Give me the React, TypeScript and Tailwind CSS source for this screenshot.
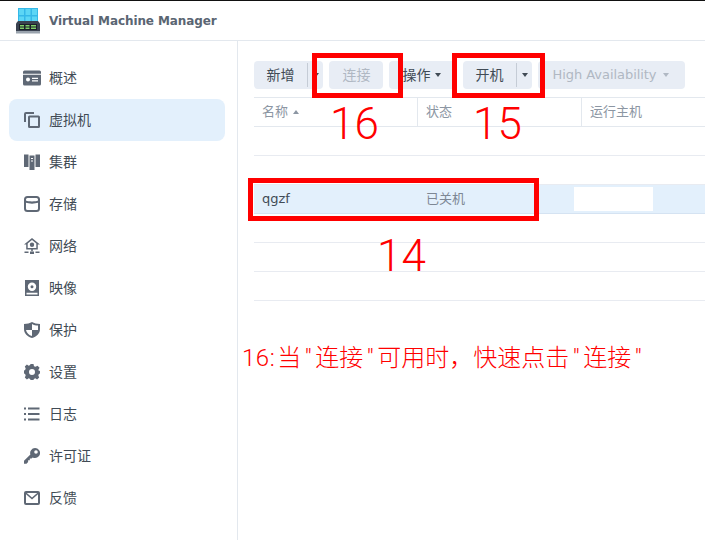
import type { ReactNode } from 'react';

const FONT = "font-['DejaVu_Sans','Noto_Sans_CJK_SC',sans-serif]";
const ICON = '#5f6875';

function Svg({ children }: { children: ReactNode }) {
  return (
    <svg width="16" height="16" viewBox="0 0 16 16" fill={ICON}>
      {children}
    </svg>
  );
}

const navItems: { label: string; icon: ReactNode }[] = [
  {
    label: '概述',
    icon: (
      <svg width="18" height="16" viewBox="0 0 18 16" fill={ICON}>
        <path fillRule="evenodd" d="M1.500 .500H16.500A1.500 1.500 0 0 1 18 2V14A1.500 1.500 0 0 1 16.500 15.500H1.500A1.500 1.500 0 0 1 0 14V2A1.500 1.500 0 0 1 1.500 .500ZM0 3.700V4.700H18V3.700ZM5 7.500A2 2 0 1 0 5 11.500A2 2 0 0 0 5 7.500ZM9 7.800V9H15V7.800ZM9 10.200V11.400H15V10.200Z" />
      </svg>
    ),
  },
  {
    label: '虚拟机',
    icon: (
      <Svg>
        <path d="M0 2A2 2 0 0 1 2 0H10V2H2V10H0Z" />
        <path fillRule="evenodd" d="M5.500 3.500H14.500A1.500 1.500 0 0 1 16 5V14.500A1.500 1.500 0 0 1 14.500 16H5.500A1.500 1.500 0 0 1 4 14.500V5A1.500 1.500 0 0 1 5.500 3.500ZM6 5.500V14H14V5.500Z" />
      </Svg>
    ),
  },
  {
    label: '集群',
    icon: (
      <Svg>
        <path fillRule="evenodd" d="M5.500 1.500H10.500V16H5.500ZM7 4V5H9V4ZM7 6.500V7.500H9V6.500Z" />
        <path d="M0 .500H4.500V13H0ZM11.500 .500H16V13H11.500Z" />
      </Svg>
    ),
  },
  {
    label: '存储',
    icon: (
      <Svg>
        <path fillRule="evenodd" d="M3.500 0H12.500A3.500 3.500 0 0 1 16 3.500V12.500A3.500 3.500 0 0 1 12.500 16H3.500A3.500 3.500 0 0 1 0 12.500V3.500A3.500 3.500 0 0 1 3.500 0ZM3.500 2A1.500 1.500 0 0 0 2 3.500V4.500C4 5.700 12 5.700 14 4.500V3.500A1.500 1.500 0 0 0 12.500 2ZM2 6.800V12.500A1.500 1.500 0 0 0 3.500 14H12.500A1.500 1.500 0 0 0 14 12.500V6.800C11.500 7.900 4.500 7.900 2 6.800Z" />
      </Svg>
    ),
  },
  {
    label: '网络',
    icon: (
      <Svg>
        <path fillRule="evenodd" d="M8 0L16 6.500H13.800V11.500H8.800V13.300H7.200V11.500H2.200V6.500H0ZM8 1.900L3.700 5.400V10H12.300V5.400ZM8 4.500A2.200 2.200 0 1 1 8 8.900A2.200 2.200 0 0 1 8 4.500Z" />
        <path d="M.500 13.500H4.500V15H.500ZM6 13.500H10V16H6ZM11.500 13.500H15.500V15H11.500Z" />
      </Svg>
    ),
  },
  {
    label: '映像',
    icon: (
      <Svg>
        <path fillRule="evenodd" d="M1 0H15V16H1ZM8 2.500A4.200 4.200 0 1 0 8 10.900A4.200 4.200 0 0 0 8 2.500ZM8 5.200A1.500 1.500 0 1 1 8 8.200A1.500 1.500 0 0 1 8 5.200ZM2.500 12.800V14.500H13.500V12.800Z" />
      </Svg>
    ),
  },
  {
    label: '保护',
    icon: (
      <Svg>
        <path fillRule="evenodd" d="M8 0C10 1.200 13 2 16 2V7C16 11.500 12.500 14.800 8 16C3.500 14.800 0 11.500 0 7V2C3 2 6 1.200 8 0ZM8 2V8H2C2.500 11 5 13.200 8 14V8H14V3.600C11.800 3.500 9.800 3 8 2Z" />
      </Svg>
    ),
  },
  {
    label: '设置',
    icon: (
      <Svg>
        <path fillRule="evenodd" d="M6.500 0H9.500L10 2.200L11.500 2.800L13.500 1.700L15.600 3.800L14.400 5.700L15 7.200L16 6.500V9.500L14.900 9.900L14.300 11.400L15.200 13.400L13.100 15.500L11.300 14.300L9.900 14.900L9.500 16H6.500L6.100 14.900L4.700 14.300L2.900 15.500L.800 13.400L1.700 11.400L1.100 9.900L0 9.500V6.500L1.100 6.100L1.700 4.600L.800 2.600L2.900 .500L4.700 1.700L6.100 1.100ZM8 5A3 3 0 1 0 8 11A3 3 0 0 0 8 5Z" />
      </Svg>
    ),
  },
  {
    label: '日志',
    icon: (
      <Svg>
        <path d="M0 1.500H2V3.500H0ZM4 1.500H15.500V3.500H4ZM0 7H2V9H0ZM4 7H15.500V9H4ZM0 12.500H2V14.500H0ZM4 12.500H15.500V14.500H4Z" />
      </Svg>
    ),
  },
  {
    label: '许可证',
    icon: (
      <Svg>
        <path fillRule="evenodd" d="M11 0A5 5 0 1 1 8.700 9.400L7.500 10.600H5.800V12.300H4.100V14L2.500 15.700H0V12.800L6.400 6.600A5 5 0 0 1 11 0ZM12 2.200A1.800 1.800 0 1 0 12 5.800A1.800 1.800 0 0 0 12 2.200Z" />
      </Svg>
    ),
  },
  {
    label: '反馈',
    icon: (
      <Svg>
        <path fillRule="evenodd" d="M2 1H14A2 2 0 0 1 16 3V13A2 2 0 0 1 14 15H2A2 2 0 0 1 0 13V3A2 2 0 0 1 2 1ZM2.800 3L8 7.500L13.200 3ZM2 4.300V13H14V4.300L8 9.500Z" />
      </Svg>
    ),
  },
];

function Logo() {
  return (
    <svg width="24" height="26" viewBox="0 0 24 26">
      <rect x="2" y="0" width="20" height="15" fill="#35b8e8" />
      <path d="M3 1h5v6H3ZM9.500 1h5v6h-5ZM16 1h5v6h-5ZM3 8.500h5V14H3ZM9.500 8.500h5V14h-5ZM16 8.500h5V14h-5Z" fill="#5cd6f5" />
      <path d="M0 15.500 L2 13h20l2 2.500V24H0Z" fill="#3a4250" />
      <rect x="0" y="23" width="24" height="2.500" fill="#9aa3ad" />
      <rect x="3" y="16" width="18" height="6" fill="#1a1f28" />
      <path d="M4 17h4v1.500H4ZM9.500 17h4v1.500h-4ZM15 17h5v1.500h-5ZM4 19.500h4V21H4ZM9.500 19.500h4V21h-4ZM15 19.500h5V21h-5Z" fill="#7fce6a" />
    </svg>
  );
}

function Caret({ color = 'border-t-[#414b55]' }: { color?: string }) {
  return <span className={`inline-block border-x-[3.5px] border-t-[4px] border-x-transparent ${color}`} />;
}

function SplitButton({ label }: { label: string }) {
  return (
    <div className="flex h-7 w-[69px] items-center rounded-[4px] bg-[#e8edf5] text-[14px] text-[#414b55]">
      <span className="flex-1 text-center">{label}</span>
      <span className="h-6 w-px bg-[#c5ccd6]" />
      <span className="flex w-[15px] justify-center">
        <Caret />
      </span>
    </div>
  );
}

function Row({ selected, children }: { selected?: boolean; children?: ReactNode }) {
  return (
    <div className={`grid h-[29px] grid-cols-[164px_164px_1fr] items-center border-b text-[13px] ${selected ? 'border-[#d5e3f2] bg-[#e3f0fc]' : 'border-[#e8ebf1]'}`}>
      {children}
    </div>
  );
}

function Box({ className }: { className: string }) {
  return <div className={`absolute border-[5px] border-[#ff0000] ${className}`} />;
}

function Note({ className, children }: { className: string; children: ReactNode }) {
  return <div className={`absolute whitespace-nowrap font-['Roboto','Noto_Sans_CJK_SC',sans-serif] font-light leading-none text-[#ff0000] ${className}`}>{children}</div>;
}

function Quote() {
  return <span className="inline-block w-[14px] text-center">″</span>;
}

export default function App() {
  return (
    <div className={`relative h-[540px] w-[705px] overflow-hidden bg-white ${FONT}`}>
      <div className="h-px bg-[#111]" />
      <header className="flex h-[40px] items-center gap-[9px] border-b border-[#e3e8ee] pl-4">
        <Logo />
        <span className="text-[12px] font-bold tracking-[-0.09px] text-[#5a6572]">Virtual Machine Manager</span>
      </header>

      <div className="flex h-[499px]">
        <aside className="w-[238px] shrink-0 border-r border-[#e3e8ee] pl-[9px] pr-3 pt-4">
          {navItems.map((item, i) => (
            <div
              key={item.label}
              className={`flex h-[42px] items-center rounded-lg text-[14px] text-[#414b55] ${i === 1 ? 'bg-[#e3f0fc]' : ''}`}
            >
              <span className="flex w-[40px] justify-center pl-[6px]">{item.icon}</span>
              <span>{item.label}</span>
            </div>
          ))}
        </aside>

        <main className="min-w-0 flex-1 pl-4 pt-5">
          <div className="flex gap-[6px]">
            <SplitButton label="新增" />
            <div className="flex h-7 w-[54px] items-center justify-center rounded-[4px] bg-[#e8edf5] pl-px text-[14px] text-[#b0b8c3]">连接</div>
            <div className="flex h-7 w-[68px] items-center justify-center gap-1 rounded-[4px] bg-[#e8edf5] pr-[3px] text-[14px] text-[#414b55]">
              操作 <Caret />
            </div>
            <SplitButton label="开机" />
            <div className="flex h-7 w-[147px] items-center justify-center gap-[6px] rounded-[4px] bg-[#e8edf5] pr-[2px] text-[13px] tracking-[-0.05px] text-[#b0b8c3]">
              High Availability <Caret color="border-t-[#b0b8c3]" />
            </div>
          </div>

          <div className="mt-2 w-[500px]">
            <div className="grid h-[30px] grid-cols-[164px_164px_1fr] items-center border-y border-[#e3e8ee] text-[13px] text-[#8c96a3]">
              <div className="flex h-full items-center gap-[5px] border-r border-[#e3e8ee] pl-2">
                名称
                <span className="inline-block border-x-[3.5px] border-b-[4px] border-x-transparent border-b-[#8c96a3]" />
              </div>
              <div className="flex h-full items-center border-r border-[#e3e8ee] pl-2">状态</div>
              <div className="pl-2">运行主机</div>
            </div>
            <Row />
            <Row />
            <Row selected>
              <div className="pl-2 text-[#414b55]">qgzf</div>
              <div className="pl-2 text-[#7d8794]">已关机</div>
              <div>
                <div className="ml-[-8px] h-6 w-[79px] bg-white" />
              </div>
            </Row>
            <Row />
            <Row />
            <Row />
          </div>
        </main>
      </div>

      {/* annotations drawn over the screenshot */}
      <Box className="left-[312px] top-[53px] h-[45px] w-[91px]" />
      <Box className="left-[452px] top-[53px] h-[45px] w-[93px]" />
      <Box className="left-[248px] top-[178px] h-[43px] w-[291px]" />
      <Note className="left-[330px] top-[102px] text-[44px]">16</Note>
      <Note className="left-[473px] top-[102px] text-[44px]">15</Note>
      <Note className="left-[377px] top-[234px] text-[44px]">14</Note>
      <Note className="left-[242px] top-[346px] text-[24px]">
        <span className="mr-[2px] tracking-[0.5px]">16:</span>当<Quote />连接<Quote />可用时，快速点击<Quote />连接<Quote />
      </Note>
    </div>
  );
}
